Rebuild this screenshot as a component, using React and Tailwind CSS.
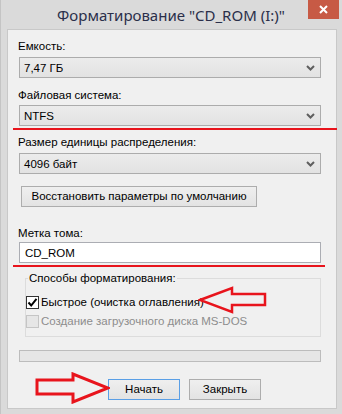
import React from 'react';

const Chevron = () => (
  <svg width="9" height="6" viewBox="0 0 9 6" className="mr-[5px]">
    <path d="M1 1 L4.5 4.5 L8 1" fill="none" stroke="#5f5f5f" strokeWidth="2" />
  </svg>
);

const Select = ({ value, className = '' }) => (
  <div
    className={`flex items-center justify-between w-[302px] h-[21px] border border-[#acacac] bg-gradient-to-b from-[#ececec] to-[#e2e2e2] pl-[4px] ${className}`}
  >
    <span className="text-[11.5px] leading-[14px] text-black">{value}</span>
    <Chevron />
  </div>
);

const Label = ({ children, className = '' }) => (
  <div className={`h-[14px] leading-[14px] text-[11.5px] text-black ${className}`}>{children}</div>
);

const Button = ({ children, className = '' }) => (
  <div
    className={`flex items-center justify-center h-[21px] border bg-gradient-to-b from-[#efefef] to-[#e3e3e3] text-[11.5px] text-black ${className}`}
  >
    {children}
  </div>
);

const App = () => {
  return (
    <div
      className="w-[342px] h-[414px] bg-[#dadada] border-l border-[#c4c4c4] overflow-hidden"
      style={{ fontFamily: '"Liberation Sans", Arial, sans-serif' }}
    >
      <div className="relative h-[29px] flex items-center justify-center">
        <span
          className="text-[15px] text-[#2a2f4a] pt-[1px] -ml-px"
          style={{ fontFamily: '"Noto Sans", sans-serif' }}
        >
          Форматирование "CD_ROM (I:)"
        </span>
        <div className="absolute top-0 right-[3px] w-[31px] h-[19px] bg-[#c75a45] flex items-center justify-center">
          <svg width="9" height="9" viewBox="0 0 9 9">
            <path d="M1 1 L8 8 M8 1 L1 8" stroke="#fff" strokeWidth="2" />
          </svg>
        </div>
      </div>

      <div className="relative ml-[6px] w-[330px] h-[380px] border border-[#c8c8c8] bg-[#f0f0f0] flex flex-col">
        <Label className="mt-[9px] ml-[10px]">Емкость:</Label>
        <Select value="7,47 ГБ" className="mt-[4px] ml-[11px]" />

        <Label className="mt-[10px] ml-[10px]">Файловая система:</Label>
        <Select value="NTFS" className="mt-[3px] ml-[11px]" />
        <div className="mt-[2px] ml-[5px] w-[324px] h-[2px] bg-[#e8141c]" />

        <Label className="mt-[5px] ml-[10px]">Размер единицы распределения:</Label>
        <Select value="4096 байт" className="mt-[4px] ml-[11px]" />

        <Button className="mt-[12px] ml-[13px] w-[236px] border-[#adadad]">
          Восстановить параметры по умолчанию
        </Button>

        <Label className="mt-[19px] ml-[10px]">Метка тома:</Label>
        <div className="mt-[2px] ml-[11px] w-[302px] h-[21px] border border-[#abadb3] bg-white flex items-center pl-[5px]">
          <span className="text-[11.5px] leading-[14px] text-black">CD_ROM</span>
        </div>
        <div className="mt-[2px] ml-[5px] w-[312px] h-[2px] bg-[#e8141c]" />

        <div className="relative mt-[11px] ml-[17px] w-[296px] h-[59px] border border-[#dcdcdc] flex flex-col">
          <div className="absolute -top-[8px] left-[2px] px-[1px] bg-[#f0f0f0] h-[14px] leading-[14px] text-[11.5px] text-black">
            Способы форматирования:
          </div>
          <div className="flex items-center mt-[16px]">
            <div className="w-[13px] h-[13px] border border-[#333] bg-white flex items-center justify-center">
              <svg width="11" height="11" viewBox="0 0 11 11">
                <path d="M1.5 5.5 L4.2 8.5 L9.5 1.8" fill="none" stroke="#000" strokeWidth="2" />
              </svg>
            </div>
            <span className="ml-[2px] text-[11.5px] leading-[14px] text-black">Быстрое (очистка оглавления)</span>
          </div>
          <div className="flex items-center mt-[5px]">
            <div className="w-[13px] h-[13px] border border-[#c5c5c5] bg-[#e6e6e6]" />
            <span className="ml-[2px] text-[11.5px] leading-[14px] text-[#8d8d8d]">
              Создание загрузочного диска MS-DOS
            </span>
          </div>
        </div>

        <div className="mt-[13px] ml-[11px] w-[302px] h-[12px] border border-[#bcbcbc] bg-[#e6e6e6]" />

        <div className="flex mt-[17px] ml-[100px] gap-[9px]">
          <Button className="w-[72px] border-[#5a9fe6]">Начать</Button>
          <Button className="w-[72px] border-[#adadad]">Закрыть</Button>
        </div>

        <svg
          className="absolute left-[190px] top-[256px]"
          width="70"
          height="30"
          viewBox="0 0 70 30"
        >
          <path
            d="M2 14 L34 2 L34 8 L67 8 L67 19 L34 19 L34 26 Z"
            fill="none"
            stroke="#e8141c"
            strokeWidth="2.5"
          />
        </svg>

        <svg
          className="absolute left-[27px] top-[342px]"
          width="75"
          height="32"
          viewBox="0 0 75 32"
        >
          <path
            d="M2 8 L38 8 L38 2 L73 16 L38 30 L38 22 L2 22 Z"
            fill="none"
            stroke="#e8141c"
            strokeWidth="3"
          />
        </svg>
      </div>
    </div>
  );
};

export default App;
